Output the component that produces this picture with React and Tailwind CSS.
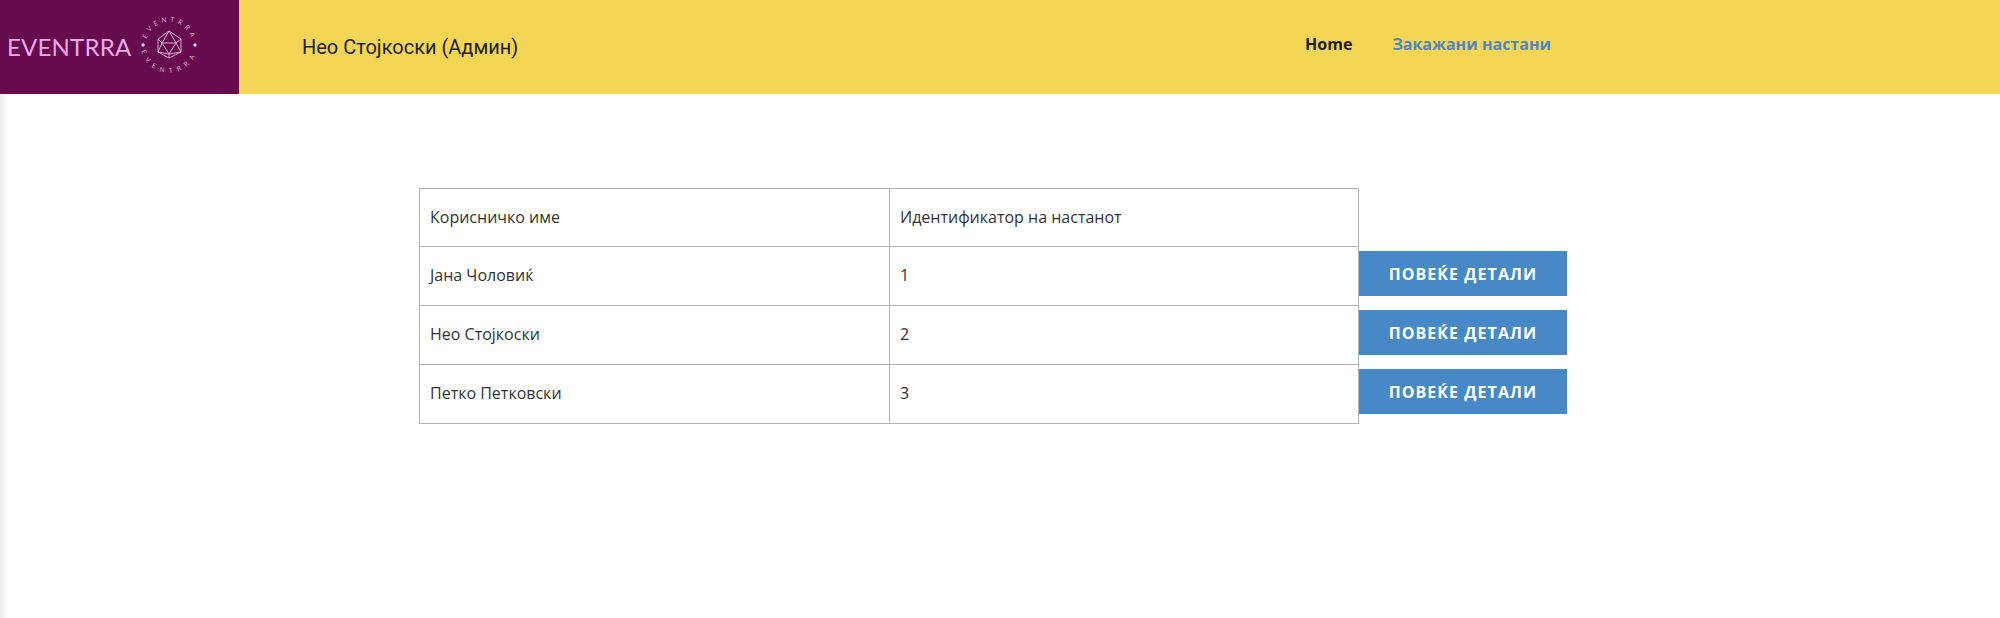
const rows = [
  ["Јана Чоловиќ", "1"],
  ["Нео Стојкоски", "2"],
  ["Петко Петковски", "3"],
];

function Logo() {
  return (
    <div className="flex h-full w-[239px] shrink-0 items-center bg-[#660b4e]">
      <span className="ml-[7px] w-[126px] font-['Lato',sans-serif] text-[24px] font-normal leading-none tracking-[0.2px] text-[#eda9e6]">EVENTRRA</span>
      <svg className="mb-[4px]" width="72" height="72" viewBox="0 0 72 72" fill="none">
        <defs>
          <path id="arcTop" d="M13.5 31 A23 23 0 0 1 58.5 31" />
          <path id="arcBottom" d="M8.5 41 A28 28 0 0 0 63.5 41" />
        </defs>
        <text fontFamily="Lato, sans-serif" fontSize="6.5" fill="#d9a5cf" letterSpacing="3.6">
          <textPath href="#arcTop" startOffset="1">EVENTRRA</textPath>
        </text>
        <text fontFamily="Lato, sans-serif" fontSize="6.5" fill="#d9a5cf" letterSpacing="5.2">
          <textPath href="#arcBottom" startOffset="1">EVENTRRA</textPath>
        </text>
        <circle cx="10" cy="36" r="1.7" fill="#f0d8ea" />
        <circle cx="62" cy="36" r="1.7" fill="#f0d8ea" />
        <g stroke="#d8a9cc" strokeWidth="1" strokeLinejoin="round">
          <path d="M36 22 L48 30 L48 43 L36 49 L25 43 L25 30 Z" />
          <path d="M36 22 L29 34 L43 34 Z M25 30 L29 34 L25 43 M48 30 L43 34 L48 43 M29 34 L36 45 L43 34 M25 43 L36 45 L48 43 M36 45 L36 49" />
        </g>
      </svg>
    </div>
  );
}

export default function App() {
  return (
    <div className="min-h-[618px] bg-white font-['Open_Sans',sans-serif]">
      <header className="flex h-[94px] items-center bg-[#f5d654]">
        <Logo />
        <div className="ml-[63px] flex-1 font-['Roboto',sans-serif] text-[20px] text-[#1f1f1f]">Нео Стојкоски (Админ)</div>
        <nav className="mr-[449px] mb-[7px] flex gap-[40px] text-[16px] leading-[24px] font-bold">
          <a className="text-[#1c1c1c]">Home</a>
          <a className="text-[#4f87c1]">Закажани настани</a>
        </nav>
      </header>
      <main className="h-[524px] bg-[linear-gradient(to_right,#ececec,#ffffff_8px)] pt-[94px] pl-[419px]">
        <table className="border-collapse text-[16px] text-[#333333]">
          <tbody>
            <tr className="h-[58px]">
              <td className="w-[470px] border border-[#b4b4b4] px-[10px] pt-0 pb-[2px]">Корисничко име</td>
              <td className="w-[469px] border border-[#b4b4b4] px-[10px] pt-0 pb-[2px]">Идентификатор на настанот</td>
            </tr>
            {rows.map(([name, id]) => (
              <tr key={id} className="h-[59px]">
                <td className="border border-[#b4b4b4] px-[10px] pt-0 pb-[2px]">{name}</td>
                <td className="border border-[#b4b4b4] px-[10px] pt-0 pb-[2px]">{id}</td>
                <td className="p-0 pb-[5px] align-middle">
                  <button className="block h-[45px] w-[208px] bg-[#4788c7] text-[16px] font-bold tracking-[1.05px] text-white">ПОВЕЌЕ ДЕТАЛИ</button>
                </td>
              </tr>
            ))}
          </tbody>
        </table>
      </main>
    </div>
  );
}
